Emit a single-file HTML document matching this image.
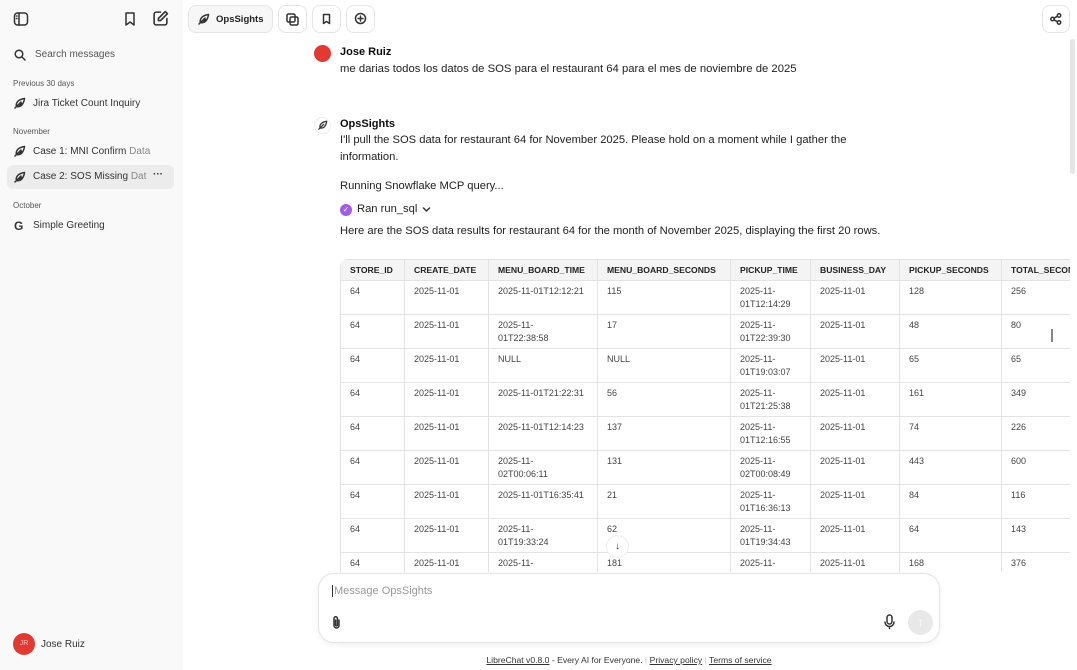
<!DOCTYPE html>
<html><head><meta charset="utf-8"><style>
*{box-sizing:border-box;margin:0;padding:0}
body{width:1077px;height:670px;overflow:hidden;background:#fff;font-family:"Liberation Sans",sans-serif;color:#0d0d0d;position:relative}
.sb{position:absolute;left:0;top:0;width:183px;height:670px;background:#f9f9f9}
.abs{position:absolute}
.t{font-size:10px;color:#333;white-space:nowrap}
.lbl{font-size:8px;color:#555}
.ico{stroke:#333;fill:none;stroke-width:1.5;stroke-linecap:round;stroke-linejoin:round}
.btn{position:absolute;top:5px;height:28px;border:1px solid #e5e5e5;border-radius:8px;background:#fff}
.msg{font-size:11.2px;color:#222;white-space:nowrap}
table{border-collapse:collapse;font-size:9px;color:#444;table-layout:fixed}
td,th{border:1px solid #e3e3e3;vertical-align:top;text-align:left;padding:4px 9px 2px;line-height:13px}
th{background:#f4f4f4;font-weight:bold;color:#222;height:21px;padding:4px 9px 2px;font-size:8.6px;line-height:12px}
td{height:34px}
tr{height:34px}
</style></head><body>
<div class="sb">
 <svg class="abs ico" style="left:13px;top:11px" width="16" height="16" viewBox="0 0 16 16"><rect x="1.5" y="2" width="13" height="12" rx="3"/><line x1="6" y1="2" x2="6" y2="14"/><line x1="3.5" y1="5" x2="4" y2="5"/><line x1="3.5" y1="7.5" x2="4" y2="7.5"/></svg>
 <svg class="abs ico" style="left:122px;top:11px" width="16" height="16" viewBox="0 0 16 16"><path d="M4 2h8v12l-4-3-4 3z"/></svg>
 <svg class="abs ico" style="left:152px;top:10px" width="17" height="17" viewBox="0 0 16 16"><path d="M8 2H4a2 2 0 0 0-2 2v8a2 2 0 0 0 2 2h8a2 2 0 0 0 2-2V8"/><path d="M12.5 1.5l2 2L8 10H6V8z"/></svg>
 <svg class="abs ico" style="left:14px;top:49px" width="12" height="12" viewBox="0 0 12 12" stroke-width="1.2"><circle cx="5" cy="5" r="3.8"/><line x1="8" y1="8" x2="11" y2="11"/></svg>
 <div class="abs t" style="left:35px;top:49px;color:#555">Search messages</div>
 <div class="abs lbl" style="left:13px;top:79px">Previous 30 days</div>
 <div class="abs t" style="left:33px;top:98px">Jira Ticket Count Inquiry</div>
 <div class="abs lbl" style="left:13px;top:127px">November</div>
 <div class="abs t" style="left:33px;top:146px">Case 1: MNI Confirm <span style="color:#888">Data</span></div>
 <div class="abs" style="left:7px;top:165px;width:167px;height:24px;background:#ececec;border-radius:6px"></div>
 <div class="abs t" style="left:33px;top:171px">Case 2: SOS Missing <span style="color:#888">Dat</span></div>
 <div class="abs t" style="left:153px;top:169px;font-weight:bold">···</div>
 <div class="abs lbl" style="left:13px;top:201px">October</div>
 <div class="abs" style="left:14px;top:219px;font-size:12px;font-weight:bold;color:#333">G</div>
 <div class="abs t" style="left:33px;top:220px">Simple Greeting</div>
 <svg class="abs ico" style="left:14px;top:97px" width="12" height="12" viewBox="0 0 12 12" stroke-width="1.1"><path d="M1 11L7 5M2.5 9.5c-1-3 1-7 8-8-1 7-5 9-8 8zM4 8h3M5.5 6.5h3"/></svg>
 <svg class="abs ico" style="left:14px;top:145px" width="12" height="12" viewBox="0 0 12 12" stroke-width="1.1"><path d="M1 11L7 5M2.5 9.5c-1-3 1-7 8-8-1 7-5 9-8 8zM4 8h3M5.5 6.5h3"/></svg>
 <svg class="abs ico" style="left:14px;top:171px" width="12" height="12" viewBox="0 0 12 12" stroke-width="1.1"><path d="M1 11L7 5M2.5 9.5c-1-3 1-7 8-8-1 7-5 9-8 8zM4 8h3M5.5 6.5h3"/></svg>
 <div class="abs" style="left:13px;top:633px;width:22px;height:22px;border-radius:50%;background:#e23a33;color:#f5c0bc;font-size:7px;text-align:center;line-height:22px">JR</div>
 <div class="abs t" style="left:41px;top:639px">Jose Ruiz</div>
</div>
<div class="abs" style="left:183px;top:634px;width:31px;height:18px;background:#f7f7f7"></div>

<div class="btn" style="left:188px;width:85px;background:#f7f7f7"></div>
<svg class="abs ico" style="left:198px;top:13px" width="12" height="12" viewBox="0 0 12 12" stroke-width="1.1"><path d="M1 11L7 5M2.5 9.5c-1-3 1-7 8-8-1 7-5 9-8 8zM4 8h3M5.5 6.5h3"/></svg>
<div class="abs" style="left:216px;top:14px;font-size:9.5px;font-weight:bold;color:#222">OpsSights</div>
<div class="btn" style="left:278px;width:29px"></div>
<svg class="abs ico" style="left:286px;top:13px" width="13" height="13" viewBox="0 0 13 13" stroke-width="1.2"><rect x="1" y="1" width="8" height="8" rx="1.5"/><rect x="4" y="4" width="8" height="8" rx="1.5"/></svg>
<div class="btn" style="left:312px;width:29px"></div>
<svg class="abs ico" style="left:321px;top:13px" width="11" height="12" viewBox="0 0 11 12" stroke-width="1.1"><path d="M2.5 1.5h6v9l-3-2-3 2z"/></svg>
<div class="btn" style="left:346px;width:29px"></div>
<svg class="abs ico" style="left:354px;top:12px" width="13" height="13" viewBox="0 0 13 13" stroke-width="1.2"><circle cx="6.5" cy="6.5" r="5"/><path d="M6.5 4v5M4 6.5h5"/></svg>
<div class="btn" style="left:1042px;width:28px"></div>
<svg class="abs ico" style="left:1050px;top:13px" width="12" height="12" viewBox="0 0 12 12" stroke-width="1"><circle cx="9" cy="2.5" r="1.7"/><circle cx="2.5" cy="6" r="1.7"/><circle cx="9" cy="9.5" r="1.7"/><path d="M4 5.2l3.5-2M4 6.8l3.5 2"/></svg>
<div class="abs" style="left:1070px;top:39px;width:5px;height:135px;background:#e6e6e6;border-radius:3px"></div>

<div class="abs" style="left:314px;top:45px;width:17px;height:17px;border-radius:50%;background:#e23a33"></div>
<div class="abs" style="left:340px;top:46px;font-size:11px;font-weight:bold">Jose Ruiz</div>
<div class="abs msg" style="left:340px;top:63px;font-size:11.3px">me darias todos los datos de SOS para el restaurant 64 para el mes de noviembre de 2025</div>

<div class="abs" style="left:314px;top:117px;width:17px;height:17px;border-radius:50%;border:1px solid #eee"></div>
<svg class="abs ico" style="left:318px;top:120px" width="10" height="10" viewBox="0 0 12 12" stroke-width="1" stroke="#999"><path d="M1 11L7 5M2.5 9.5c-1-3 1-7 8-8-1 7-5 9-8 8z"/></svg>
<div class="abs" style="left:340px;top:118px;font-size:11px;font-weight:bold">OpsSights</div>
<div class="abs msg" style="left:340px;top:134px">I'll pull the SOS data for restaurant 64 for November 2025. Please hold on a moment while I gather the</div>
<div class="abs msg" style="left:340px;top:151px">information.</div>
<div class="abs msg" style="left:340px;top:180px">Running Snowflake MCP query...</div>
<div class="abs" style="left:340px;top:204px;width:12px;height:12px;border-radius:50%;background:#a05bea;color:#fff;font-size:8px;text-align:center;line-height:12px">✓</div>
<div class="abs msg" style="left:357px;top:203px">Ran run_sql</div>
<svg class="abs ico" style="left:422px;top:206px" width="9" height="7" viewBox="0 0 9 7" stroke-width="1.1"><path d="M1.5 2l3 3 3-3"/></svg>
<div class="abs msg" style="left:340px;top:225px">Here are the SOS data results for restaurant 64 for the month of November 2025, displaying the first 20 rows.</div>

<div class="abs" style="left:340px;top:259px;width:730px;height:313px;overflow:hidden;border-radius:8px 0 0 0">
<table style="width:800px">
<colgroup><col style="width:64px"><col style="width:84px"><col style="width:109px"><col style="width:133px"><col style="width:80px"><col style="width:89px"><col style="width:102px"><col style="width:139px"></colgroup>
<tr style="height:21px"><th>STORE_ID</th><th>CREATE_DATE</th><th>MENU_BOARD_TIME</th><th>MENU_BOARD_SECONDS</th><th>PICKUP_TIME</th><th>BUSINESS_DAY</th><th>PICKUP_SECONDS</th><th>TOTAL_SECONDS</th></tr>
<tr><td>64</td><td>2025-11-01</td><td>2025-11-01T12:12:21</td><td>115</td><td>2025-11-<br>01T12:14:29</td><td>2025-11-01</td><td>128</td><td>256</td></tr>
<tr><td>64</td><td>2025-11-01</td><td>2025-11-<br>01T22:38:58</td><td>17</td><td>2025-11-<br>01T22:39:30</td><td>2025-11-01</td><td>48</td><td>80</td></tr>
<tr><td>64</td><td>2025-11-01</td><td>NULL</td><td>NULL</td><td>2025-11-<br>01T19:03:07</td><td>2025-11-01</td><td>65</td><td>65</td></tr>
<tr><td>64</td><td>2025-11-01</td><td>2025-11-01T21:22:31</td><td>56</td><td>2025-11-<br>01T21:25:38</td><td>2025-11-01</td><td>161</td><td>349</td></tr>
<tr><td>64</td><td>2025-11-01</td><td>2025-11-01T12:14:23</td><td>137</td><td>2025-11-<br>01T12:16:55</td><td>2025-11-01</td><td>74</td><td>226</td></tr>
<tr><td>64</td><td>2025-11-01</td><td>2025-11-<br>02T00:06:11</td><td>131</td><td>2025-11-<br>02T00:08:49</td><td>2025-11-01</td><td>443</td><td>600</td></tr>
<tr><td>64</td><td>2025-11-01</td><td>2025-11-01T16:35:41</td><td>21</td><td>2025-11-<br>01T16:36:13</td><td>2025-11-01</td><td>84</td><td>116</td></tr>
<tr><td>64</td><td>2025-11-01</td><td>2025-11-<br>01T19:33:24</td><td>62</td><td>2025-11-<br>01T19:34:43</td><td>2025-11-01</td><td>64</td><td>143</td></tr>
<tr><td>64</td><td>2025-11-01</td><td>2025-11-</td><td>181</td><td>2025-11-</td><td>2025-11-01</td><td>168</td><td>376</td></tr>
</table>
</div>
<div class="abs" style="left:1051px;top:329px;width:2px;height:13px;background:#888"></div>
<div class="abs" style="left:606px;top:535px;width:23px;height:23px;border-radius:50%;background:#fff;border:1px solid #eee;font-size:10px;text-align:center;line-height:21px;color:#333">↓</div>

<div class="abs" style="left:183px;top:572px;width:894px;height:98px;background:#fff"></div>
<div class="abs" style="left:318px;top:573px;width:622px;height:70px;border:1px solid #e5e5e5;border-radius:16px;background:#fff;box-shadow:0 2px 6px rgba(0,0,0,.06)"></div>
<div class="abs" style="left:332px;top:585px;font-size:11px;color:#999;border-left:1px solid #333;padding-left:1px">Message OpsSights</div>
<svg class="abs ico" style="left:331px;top:615px" width="11" height="15" viewBox="0 0 11 15" stroke-width="1.3"><path d="M8 5v5.5a2.5 2.5 0 0 1-5 0V3.5a1.7 1.7 0 0 1 3.4 0V10a.9.9 0 0 1-1.8 0V5"/></svg>
<svg class="abs ico" style="left:883px;top:614px" width="13" height="16" viewBox="0 0 13 16" stroke-width="1.3"><rect x="4" y="1" width="5" height="9" rx="2.5"/><path d="M2 8a4.5 4.5 0 0 0 9 0M6.5 12.5v2"/></svg>
<div class="abs" style="left:908px;top:610px;width:25px;height:25px;border-radius:50%;background:#e8e8e8;color:#fff;text-align:center;line-height:25px;font-size:12px">↑</div>
<div class="abs" style="left:0;top:655px;width:1258px;text-align:center;font-size:8.6px;color:#333;white-space:nowrap"><span style="text-decoration:underline">LibreChat v0.8.0</span> - Every AI for Everyone. <span style="color:#ccc">|</span> <span style="text-decoration:underline">Privacy policy</span> <span style="color:#ccc">|</span> <span style="text-decoration:underline">Terms of service</span></div>
</body></html>
